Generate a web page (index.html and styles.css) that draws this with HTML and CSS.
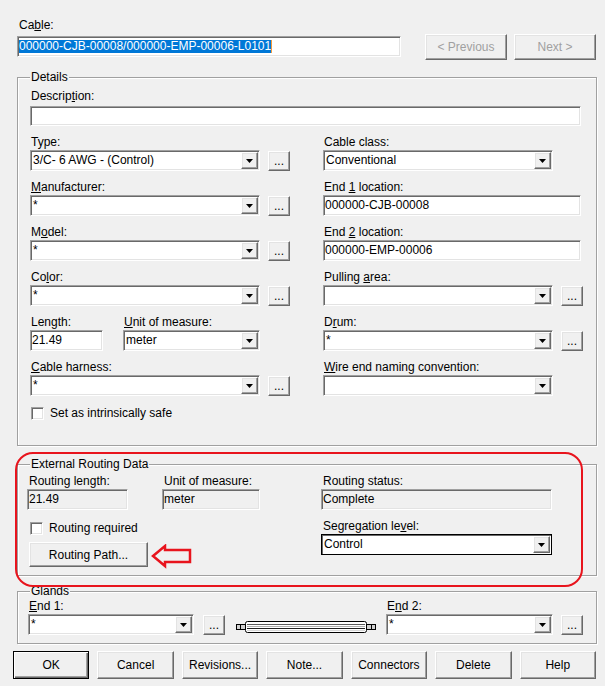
FILE: index.html
```html
<!DOCTYPE html>
<html>
<head>
<meta charset="utf-8">
<link rel="stylesheet" href="styles.css">
</head>
<body>
<div class="dialog">
  <div class="top">
    <div class="cable-col">
      <div class="lbl lbl-cable">Ca<u>b</u>le:</div>
      <div class="edit cable-edit"><span class="sel">000000-CJB-00008/000000-EMP-00006-L0101</span><span class="caret"></span></div>
    </div>
    <div class="nav">
      <div class="btn nav-btn">&lt; Previous</div>
      <div class="btn nav-btn">Next &gt;</div>
    </div>
  </div>

  <div class="group details">
    <span class="gtitle">Details</span>
    <div class="field desc">
      <div class="lbl desc-lbl">Descrip<u>t</u>ion:</div>
      <div class="edit desc-edit"></div>
    </div>
    <div class="grid">
      <div class="field">
        <div class="lbl">Type:</div>
        <div class="ctl">
          <div class="combo"><span class="val">3/C- 6 AWG - (Control)</span><span class="drop"><svg width="7" height="4" viewBox="0 0 7 4"><polygon points="0,0 7,0 3.5,4" fill="#000"/></svg></span></div>
          <div class="dots">...</div>
        </div>
      </div>
      <div class="field">
        <div class="lbl">Cable class:</div>
        <div class="ctl">
          <div class="combo"><span class="val">Conventional</span><span class="drop"><svg width="7" height="4" viewBox="0 0 7 4"><polygon points="0,0 7,0 3.5,4" fill="#000"/></svg></span></div>
        </div>
      </div>

      <div class="field">
        <div class="lbl"><u>M</u>anufacturer:</div>
        <div class="ctl">
          <div class="combo"><span class="val">*</span><span class="drop"><svg width="7" height="4" viewBox="0 0 7 4"><polygon points="0,0 7,0 3.5,4" fill="#000"/></svg></span></div>
          <div class="dots">...</div>
        </div>
      </div>
      <div class="field">
        <div class="lbl">End <u>1</u> location:</div>
        <div class="ctl">
          <div class="edit w258">000000-CJB-00008</div>
        </div>
      </div>

      <div class="field">
        <div class="lbl">M<u>o</u>del:</div>
        <div class="ctl">
          <div class="combo"><span class="val">*</span><span class="drop"><svg width="7" height="4" viewBox="0 0 7 4"><polygon points="0,0 7,0 3.5,4" fill="#000"/></svg></span></div>
          <div class="dots">...</div>
        </div>
      </div>
      <div class="field">
        <div class="lbl">End <u>2</u> location:</div>
        <div class="ctl">
          <div class="edit w258">000000-EMP-00006</div>
        </div>
      </div>

      <div class="field">
        <div class="lbl">Co<u>l</u>or:</div>
        <div class="ctl">
          <div class="combo"><span class="val">*</span><span class="drop"><svg width="7" height="4" viewBox="0 0 7 4"><polygon points="0,0 7,0 3.5,4" fill="#000"/></svg></span></div>
          <div class="dots">...</div>
        </div>
      </div>
      <div class="field">
        <div class="lbl">Pulling <u>a</u>rea:</div>
        <div class="ctl">
          <div class="combo"><span class="val"></span><span class="drop"><svg width="7" height="4" viewBox="0 0 7 4"><polygon points="0,0 7,0 3.5,4" fill="#000"/></svg></span></div>
          <div class="dots">...</div>
        </div>
      </div>

      <div class="len-row">
        <div class="field">
          <div class="lbl">Len<u>g</u>th:</div>
          <div class="ctl">
            <div class="edit w73">21.49</div>
          </div>
        </div>
        <div class="field unit-field">
          <div class="lbl"><u>U</u>nit of measure:</div>
          <div class="ctl">
            <div class="combo w137"><span class="val">meter</span><span class="drop"><svg width="7" height="4" viewBox="0 0 7 4"><polygon points="0,0 7,0 3.5,4" fill="#000"/></svg></span></div>
          </div>
        </div>
      </div>
      <div class="field">
        <div class="lbl">D<u>r</u>um:</div>
        <div class="ctl">
          <div class="combo"><span class="val">*</span><span class="drop"><svg width="7" height="4" viewBox="0 0 7 4"><polygon points="0,0 7,0 3.5,4" fill="#000"/></svg></span></div>
          <div class="dots">...</div>
        </div>
      </div>

      <div class="field">
        <div class="lbl"><u>C</u>able harness:</div>
        <div class="ctl">
          <div class="combo"><span class="val">*</span><span class="drop"><svg width="7" height="4" viewBox="0 0 7 4"><polygon points="0,0 7,0 3.5,4" fill="#000"/></svg></span></div>
          <div class="dots">...</div>
        </div>
      </div>
      <div class="field">
        <div class="lbl"><u>W</u>ire end naming convention:</div>
        <div class="ctl">
          <div class="combo"><span class="val"></span><span class="drop"><svg width="7" height="4" viewBox="0 0 7 4"><polygon points="0,0 7,0 3.5,4" fill="#000"/></svg></span></div>
        </div>
      </div>
    </div>
    <div class="check-row"><span class="checkbox"></span><span>Set as intrinsically safe</span></div>
  </div>

  <div class="group routing">
    <span class="gtitle">External Routing Data</span>
    <div class="r-left">
      <div class="r-row1">
        <div class="field">
          <div class="lbl rl">Routing length:</div>
          <div class="edit ro w101">21.49</div>
        </div>
        <div class="field">
          <div class="lbl rl">Unit of measure:</div>
          <div class="edit ro w98">meter</div>
        </div>
      </div>
      <div class="check-row r-check"><span class="checkbox"></span><span>Routing required</span></div>
      <div class="btn route-btn">Routing Path...</div>
    </div>
    <div class="r-right">
      <div class="field">
        <div class="lbl rl">Routing status:</div>
        <div class="edit ro w231">Complete</div>
      </div>
      <div class="field seg-field">
        <div class="lbl rl">Segregation le<u>v</u>el:</div>
        <div class="combo focus w231"><span class="val">Control</span><span class="drop"><svg width="7" height="4" viewBox="0 0 7 4"><polygon points="0,0 7,0 3.5,4" fill="#000"/></svg></span></div>
      </div>
    </div>
  </div>

  <div class="group glands">
    <span class="gtitle">Glands</span>
    <div class="g-row">
      <div class="field">
        <div class="lbl"><u>E</u>nd 1:</div>
        <div class="ctl g-ctl1">
          <div class="combo w166"><span class="val">*</span><span class="drop"><svg width="7" height="4" viewBox="0 0 7 4"><polygon points="0,0 7,0 3.5,4" fill="#000"/></svg></span></div>
          <div class="dots">...</div>
        </div>
      </div>
      <svg class="cable-icon" width="140" height="12" viewBox="0 0 140 12">
        <rect x="0.5" y="3.5" width="9" height="5" fill="#d0d0d0" stroke="#000"/>
        <line x1="4.5" y1="3" x2="4.5" y2="9" stroke="#000"/>
        <rect x="130.5" y="3.5" width="9" height="5" fill="#d0d0d0" stroke="#000"/>
        <line x1="135.5" y1="3" x2="135.5" y2="9" stroke="#000"/>
        <rect x="9.5" y="0.5" width="121" height="11" rx="2" fill="#fff" stroke="#000"/>
        <line x1="11" y1="3.5" x2="129" y2="3.5" stroke="#5a5a5a"/>
        <line x1="11" y1="5.5" x2="129" y2="5.5" stroke="#b0b0b0"/>
        <line x1="11" y1="7.5" x2="129" y2="7.5" stroke="#202020"/>
        <line x1="11" y1="9.5" x2="129" y2="9.5" stroke="#d8d8d8"/>
      </svg>
      <div class="field g-end2">
        <div class="lbl">E<u>n</u>d 2:</div>
        <div class="ctl">
          <div class="combo w167"><span class="val">*</span><span class="drop"><svg width="7" height="4" viewBox="0 0 7 4"><polygon points="0,0 7,0 3.5,4" fill="#000"/></svg></span></div>
          <div class="dots">...</div>
        </div>
      </div>
    </div>
  </div>

  <div class="buttons">
    <div class="btn default">OK</div>
    <div class="btn">Cancel</div>
    <div class="btn">Revisions...</div>
    <div class="btn">Note...</div>
    <div class="btn">Connectors</div>
    <div class="btn">Delete</div>
    <div class="btn">Help</div>
  </div>

  <div class="annot-rect"></div>
  <svg class="annot-arrow" width="42" height="26" viewBox="0 0 42 26">
    <polygon points="2,12 14,2 14,6 39,6 39,18 14,18 14,22" fill="none" stroke="#e8141d" stroke-width="2.5" stroke-linejoin="miter"/>
  </svg>
</div>
</body>
</html>
```

FILE: styles.css
```css
* { box-sizing: border-box; }
html, body { margin: 0; padding: 0; background: #f0f0f0; }
body {
  font-family: "Liberation Sans", Arial, sans-serif;
  font-size: 12px;
  color: #000;
}
u { text-decoration: underline; text-underline-offset: 1px; }

.dialog {
  position: relative;
  width: 605px;
  height: 686px;
  padding: 18px 8px 0 13px;
  overflow: hidden;
}

/* top row */
.top { display: flex; margin-left: 4px; }
.cable-col { width: 384px; display: flex; flex-direction: column; }
.nav { display: flex; gap: 7px; margin-left: 24px; margin-top: 16px; }
.nav-btn { width: 82px; height: 26px; color: #a0a0a0; }

.lbl { height: 15px; line-height: 15px; white-space: nowrap; padding-left: 1px; }
.lbl-cable { padding-left: 2px; margin-bottom: 3px; }

/* sunken edit */
.edit {
  height: 21px;
  background: #fff;
  border: 1px solid;
  border-color: #a0a0a0 #fff #fff #a0a0a0;
  box-shadow: inset 1px 1px 0 #696969, inset -1px -1px 0 #e3e3e3;
  padding: 1px 1px;
  line-height: 17px;
  white-space: nowrap;
  overflow: hidden;
}
.edit.ro { background: #f0f0f0; }
.cable-edit { display: flex; align-items: center; }
.sel {
  display: inline-block;
  line-height: 13px;
  height: 13px;
  background: #0078d7;
  color: #fff;
}
.caret { display: inline-block; width: 1px; height: 13px; background: #f39a3c; }

/* combo box */
.combo {
  width: 230px;
  height: 21px;
  flex: none;
  display: flex;
  background: #fff;
  border: 1px solid;
  border-color: #a0a0a0 #fff #fff #a0a0a0;
  box-shadow: inset 1px 1px 0 #696969, inset -1px -1px 0 #e3e3e3;
  padding: 1px;
}
.combo.focus {
  border-color: #000;
  box-shadow: inset 1px 1px 0 #696969;
}
.combo .val {
  flex: 1;
  line-height: 17px;
  padding-left: 1px;
  overflow: hidden;
  white-space: nowrap;
}
.drop {
  width: 17px;
  height: 17px;
  flex: none;
  display: flex;
  align-items: center;
  justify-content: center;
  padding-top: 1px;
  background: #f0f0f0;
  border: 1px solid;
  border-color: #fff #696969 #696969 #fff;
  box-shadow: inset -1px -1px 0 #a0a0a0, inset 1px 1px 0 #e3e3e3;
}
.drop svg { display: block; }

/* small "..." button */
.dots {
  width: 22px;
  height: 20px;
  flex: none;
  display: flex;
  justify-content: center;
  align-items: flex-end;
  padding-bottom: 3px;
  line-height: 12px;
  background: #f0f0f0;
  border: 1px solid;
  border-color: #fff #696969 #696969 #fff;
  box-shadow: inset -1px -1px 0 #a0a0a0, inset 1px 1px 0 #e3e3e3;
}

/* push buttons */
.btn {
  display: flex;
  align-items: center;
  justify-content: center;
  white-space: nowrap;
  background: #f0f0f0;
  border: 1px solid;
  border-color: #fff #696969 #696969 #fff;
  box-shadow: inset -1px -1px 0 #a0a0a0, inset 1px 1px 0 #e3e3e3;
}
.btn.default {
  border-color: #000;
  box-shadow: inset 1px 1px 0 #fff, inset -1px -1px 0 #696969, inset -2px -2px 0 #a0a0a0;
}

/* group boxes */
.group {
  position: relative;
  margin-left: 4px;
  width: 580px;
  border: 1px solid #a0a0a0;
  box-shadow: 1px 1px 0 #fff, inset 1px 1px 0 #fff;
}
.gtitle {
  position: absolute;
  top: -8px;
  left: 12px;
  padding: 0 1px;
  line-height: 15px;
  background: #f0f0f0;
  white-space: nowrap;
}

.details { margin-top: 17px; padding: 11px 12px 25px 12px; }
.desc { margin-bottom: 9px; }
.desc-lbl { margin-bottom: 2px; }
.desc-edit { width: 551px; height: 20px; }

.grid {
  display: grid;
  grid-template-columns: 260px 260px;
  column-gap: 33px;
  row-gap: 9px;
}
.field { display: flex; flex-direction: column; }
.ctl { display: flex; align-items: flex-end; gap: 8px; height: 21px; }
.len-row { display: flex; }
.unit-field { margin-left: 20px; }

.check-row {
  display: flex;
  align-items: center;
  gap: 6px;
  height: 13px;
  margin-top: 11px;
  padding-left: 1px;
  line-height: 13px;
}
.checkbox {
  width: 13px;
  height: 13px;
  flex: none;
  background: #fff;
  border: 1px solid;
  border-color: #a0a0a0 #fff #fff #a0a0a0;
  box-shadow: inset 1px 1px 0 #696969, inset -1px -1px 0 #e3e3e3;
}

/* routing */
.routing { margin-top: 18px; padding: 9px 9px 8px 9px; display: flex; }
.r-left { width: 233px; }
.r-row1 { display: flex; gap: 34px; }
.rl { padding-left: 2px; }
.r-check { margin-top: 12px; padding-left: 3px; }
.route-btn { width: 119px; height: 25px; margin-top: 7px; margin-left: 2px; }
.r-right { margin-left: 61px; width: 231px; }
.seg-field { margin-top: 9px; }

/* glands */
.glands { margin-top: 15px; padding: 7px 10px 8px 10px; }
.g-row { display: flex; align-items: flex-end; }
.g-ctl1 { gap: 9px; }
.cable-icon { display: block; flex: none; margin-left: 11px; margin-bottom: 2px; }
.g-end2 { margin-left: 10px; }

/* bottom buttons */
.buttons { display: flex; gap: 8px; width: 583px; margin-top: 7px; }
.buttons .btn { flex: 1; height: 28px; }

/* widths (after component rules so they win) */
.w258 { width: 258px; }
.w73 { width: 73px; }
.w101 { width: 101px; }
.w98 { width: 98px; }
.w231 { width: 231px; }
.w137 { width: 137px; }
.w166 { width: 166px; }
.w167 { width: 167px; }

/* annotations */
.annot-rect {
  position: absolute;
  left: 15px;
  top: 452px;
  width: 568px;
  height: 135px;
  border: 2.5px solid #e8141d;
  border-radius: 18px;
}
.annot-arrow { position: absolute; left: 151px; top: 544px; }
```
